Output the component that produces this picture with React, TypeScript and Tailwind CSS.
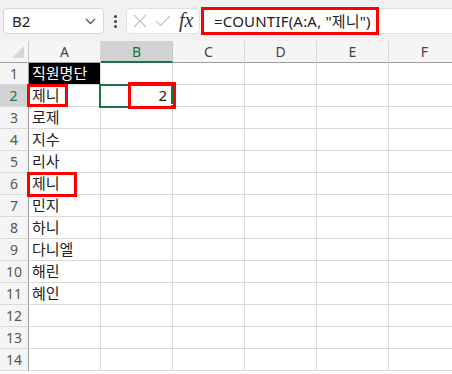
import React from "react";

const cols = ["A", "B", "C", "D", "E", "F"];
const names = ["직원명단", "제니", "로제", "지수", "리사", "제니", "민지", "하니", "다니엘", "해린", "혜인", "", "", ""];

export default function App() {
  return (
    <div
      className="relative w-[452px] h-[374px] overflow-hidden bg-white text-[#222]"
      style={{ fontFamily: '"Noto Sans", "Noto Sans CJK KR", sans-serif' }}
    >
      {/* formula bar */}
      <div className="flex items-center h-[41px] bg-[#f1f1f1] pt-[1px]">
        <div className="ml-[3px] w-[101px] h-[26px] bg-white border border-[#d6d6d6] rounded-[4px] flex items-center justify-between pl-[8px] pr-[7px]">
          <span className="text-[15px]">B2</span>
          <svg width="11" height="7" viewBox="0 0 11 7" fill="none" stroke="#555" strokeWidth="1.3">
            <path d="M1 1l4.5 4.5L10 1" />
          </svg>
        </div>
        <div className="w-[22px] flex flex-col items-center gap-[2px]">
          <span className="w-[3px] h-[3px] rounded-full bg-[#444]" />
          <span className="w-[3px] h-[3px] rounded-full bg-[#444]" />
          <span className="w-[3px] h-[3px] rounded-full bg-[#444]" />
        </div>
        <div className="w-[74px] h-[26px] bg-white border border-[#e0e0e0] rounded-[4px] flex items-center pl-[6px] gap-[8px]">
          <svg width="14" height="14" viewBox="0 0 14 14" stroke="#c4c4c4" strokeWidth="1.2">
            <path d="M1 1l12 12M13 1L1 13" />
          </svg>
          <svg width="16" height="12" viewBox="0 0 16 12" fill="none" stroke="#c4c4c4" strokeWidth="1.2">
            <path d="M1 6l4.5 4.5L15 1" />
          </svg>
          <span className="italic text-[20px] text-[#333] leading-none -mt-[2px]" style={{ fontFamily: '"Liberation Serif", serif' }}>
            fx
          </span>
        </div>
        <div className="flex-1 h-[26px] bg-white border-y border-[#e0e0e0] flex items-center pl-[14px]">
          <span className="text-[15px] tracking-[0.2px] text-[#222]">=COUNTIF(A:A, "제니")</span>
        </div>
      </div>

      {/* sheet grid */}
      <div className="grid grid-cols-[29px_repeat(6,72px)] grid-rows-[22px_repeat(14,22px)]">
        <div className="bg-[#f5f5f5] border-r border-[#c8c8c8] border-b border-b-[#9e9e9e] relative">
          <svg className="absolute right-[4px] bottom-[4px]" width="12" height="12" viewBox="0 0 12 12">
            <path d="M12 0V12H0z" fill="#d6d6d6" />
          </svg>
        </div>
        {cols.map((c) => (
          <div
            key={c}
            className={
              c === "B"
                ? "bg-[#d2d2d2] border-r border-[#c8c8c8] border-b-2 border-b-[#1e7145] flex items-center justify-center text-[14px] text-[#1e7145]"
                : "bg-[#f5f5f5] border-r border-[#dadada] border-b border-b-[#9e9e9e] flex items-center justify-center text-[14px] text-[#444]"
            }
          >
            {c}
          </div>
        ))}
        {names.map((n, i) => (
          <React.Fragment key={i}>
            <div
              className={
                i === 1
                  ? "bg-[#d2d2d2] border-r-2 border-[#1e7145] border-b border-b-[#dadada] flex items-center justify-center text-[14px] text-[#1e7145]"
                  : "bg-[#f5f5f5] border-r border-[#9e9e9e] border-b border-b-[#dadada] flex items-center justify-center text-[14px] text-[#555]"
              }
            >
              {i + 1}
            </div>
            <div
              className={
                i === 0
                  ? "bg-black text-white border-r border-b border-[#dadada] flex items-center pl-[3px] text-[15px] whitespace-nowrap"
                  : "border-r border-b border-[#dadada] flex items-center pl-[3px] text-[15px] whitespace-nowrap"
              }
            >
              {n}
            </div>
            <div className="border-r border-b border-[#dadada] flex items-center justify-end pr-[5px] text-[15px]">
              {i === 1 ? "2" : ""}
            </div>
            <div className="border-r border-b border-[#dadada]" />
            <div className="border-r border-b border-[#dadada]" />
            <div className="border-r border-b border-[#dadada]" />
            <div className="border-r border-b border-[#dadada]" />
          </React.Fragment>
        ))}
      </div>

      {/* selection of B2 */}
      <div className="absolute left-[99px] top-[84px] w-[74px] h-[24px] border-2 border-[#1e7145]" />
      <div className="absolute left-[170px] top-[104px] w-[5px] h-[5px] bg-[#1e7145] border border-white" />

      {/* red highlight boxes */}
      <div className="absolute left-[201px] top-[7px] w-[178px] h-[28px] border-[3px] border-[#ff0000]" />
      <div className="absolute left-[27px] top-[84px] w-[41px] h-[23px] border-[3px] border-[#ff0000]" />
      <div className="absolute left-[128px] top-[82px] w-[48px] h-[27px] border-[3px] border-[#ff0000]" />
      <div className="absolute left-[27px] top-[172px] w-[50px] h-[25px] border-[3px] border-[#ff0000]" />
    </div>
  );
}
